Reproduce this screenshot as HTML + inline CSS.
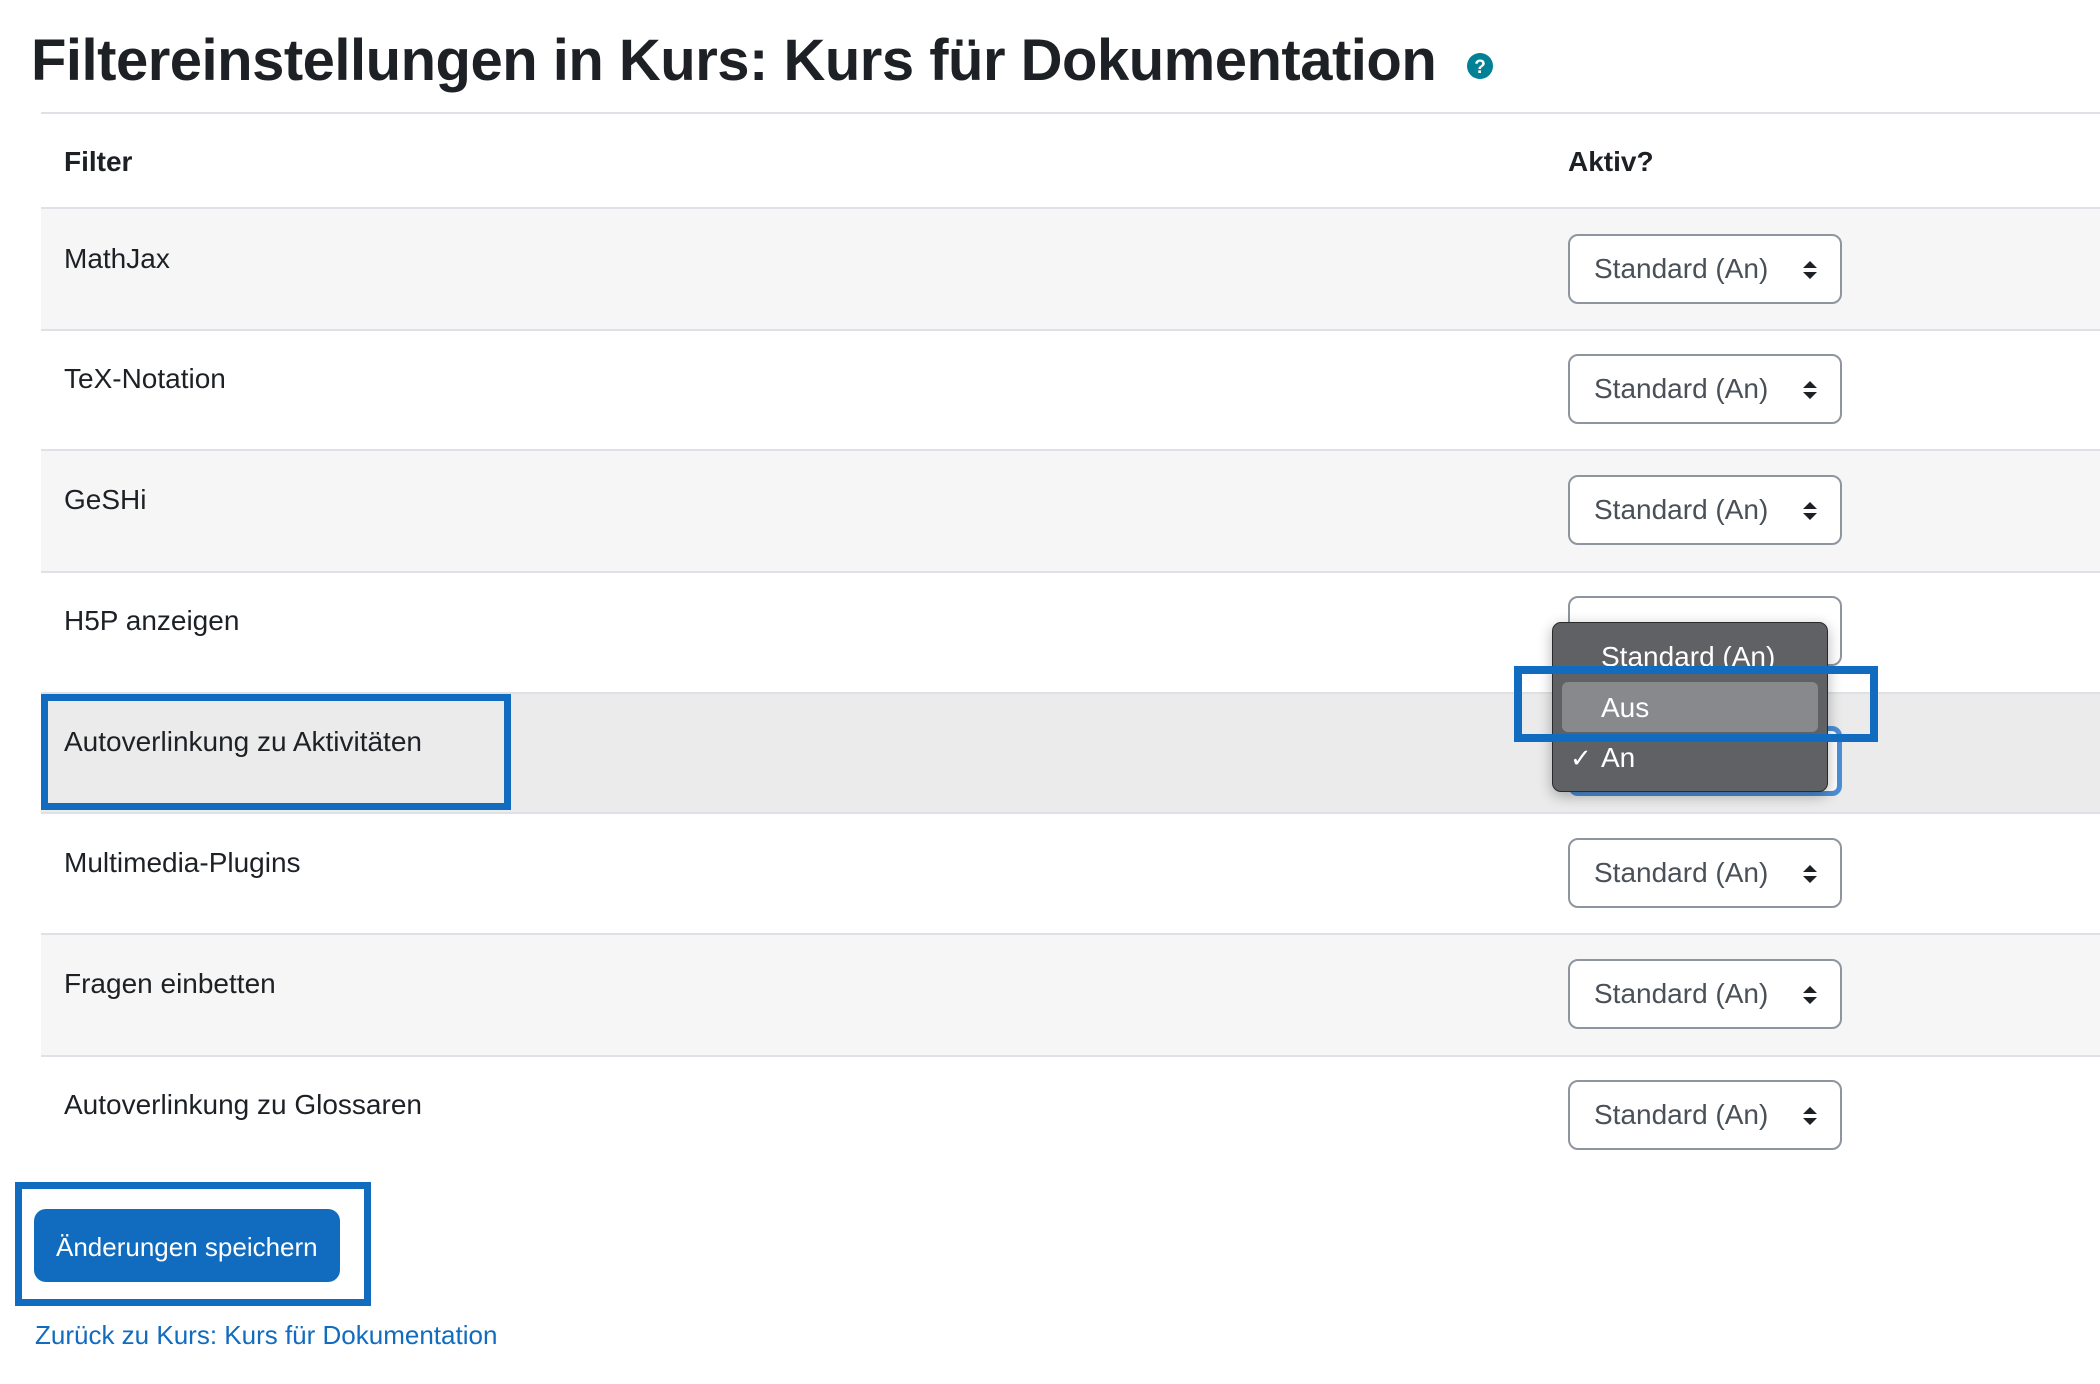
<!DOCTYPE html>
<html><head><meta charset="utf-8"><style>
*{margin:0;padding:0;box-sizing:border-box}
body{width:2100px;height:1384px;background:#fff;font-family:"Liberation Sans",sans-serif;color:#1d2125;position:relative;overflow:hidden}
.a{position:absolute;white-space:nowrap}
.row{position:absolute;left:41px;right:0;border-top:2px solid #dee2e6}
.lbl{position:absolute;left:64px;font-size:28px;line-height:34px}
.sel{position:absolute;left:1568px;width:274px;height:70px;border:2px solid #8f959e;border-radius:10px;background:#fff;font-size:28px;color:#495057}
.sel span{position:absolute;left:24px;top:16px;line-height:34px}
.arr{position:absolute;left:232px;top:24px;width:16px;height:20px}
.hl{position:absolute;border:7px solid #116cbf}
</style></head><body>
<div class="a" style="left:31px;top:26px;font-size:58px;font-weight:bold;line-height:70px;letter-spacing:-0.5px">Filtereinstellungen in Kurs: Kurs für Dokumentation</div>
<svg class="a" style="left:1466px;top:52px" width="28" height="28" viewBox="0 0 28 28"><circle cx="14" cy="14" r="13" fill="#008196"/><text x="14" y="21" text-anchor="middle" font-family="Liberation Sans" font-weight="bold" font-size="19" fill="#fff">?</text></svg>
<div class="a" style="left:41px;right:0;top:112px;border-top:2px solid #dee2e6"></div>
<div class="a" style="left:64px;top:145px;font-size:28px;font-weight:bold;line-height:34px">Filter</div>
<div class="a" style="left:1568px;top:145px;font-size:28px;font-weight:bold;line-height:34px">Aktiv?</div>
<div class="a" style="left:41px;right:0;top:207px;border-top:4px solid #dee2e6"></div>

<div class="row" style="top:209px;height:122px;background:#f6f6f6;border-top:none"></div>
<div class="row" style="top:329px;height:122px;background:#fff"></div>
<div class="row" style="top:449px;height:122px;background:#f6f6f6"></div>
<div class="row" style="top:571px;height:122px;background:#fff"></div>
<div class="row" style="top:692px;height:122px;background:#ebebeb"></div>
<div class="row" style="top:812px;height:122px;background:#fff"></div>
<div class="row" style="top:933px;height:122px;background:#f6f6f6"></div>
<div class="row" style="top:1055px;height:122px;background:#fff"></div>

<div class="lbl" style="top:242px">MathJax</div>
<div class="lbl" style="top:362px">TeX-Notation</div>
<div class="lbl" style="top:483px">GeSHi</div>
<div class="lbl" style="top:604px">H5P anzeigen</div>
<div class="lbl" style="top:725px">Autoverlinkung zu Aktivitäten</div>
<div class="lbl" style="top:846px">Multimedia-Plugins</div>
<div class="lbl" style="top:967px">Fragen einbetten</div>
<div class="lbl" style="top:1088px">Autoverlinkung zu Glossaren</div>

<div class="sel" style="top:234px"><span>Standard (An)</span><svg class="arr" viewBox="0 0 16 20"><path d="M1 8L8 1L15 8Z M1 12L8 19L15 12Z" fill="#1d2125"/></svg></div>
<div class="sel" style="top:354px"><span>Standard (An)</span><svg class="arr" viewBox="0 0 16 20"><path d="M1 8L8 1L15 8Z M1 12L8 19L15 12Z" fill="#1d2125"/></svg></div>
<div class="sel" style="top:475px"><span>Standard (An)</span><svg class="arr" viewBox="0 0 16 20"><path d="M1 8L8 1L15 8Z M1 12L8 19L15 12Z" fill="#1d2125"/></svg></div>
<div class="sel" style="top:596px"></div>
<div class="sel" style="top:726px;border:5px solid #4b8fd6;height:70px;left:1568px"></div>
<div class="sel" style="top:838px"><span>Standard (An)</span><svg class="arr" viewBox="0 0 16 20"><path d="M1 8L8 1L15 8Z M1 12L8 19L15 12Z" fill="#1d2125"/></svg></div>
<div class="sel" style="top:959px"><span>Standard (An)</span><svg class="arr" viewBox="0 0 16 20"><path d="M1 8L8 1L15 8Z M1 12L8 19L15 12Z" fill="#1d2125"/></svg></div>
<div class="sel" style="top:1080px"><span>Standard (An)</span><svg class="arr" viewBox="0 0 16 20"><path d="M1 8L8 1L15 8Z M1 12L8 19L15 12Z" fill="#1d2125"/></svg></div>

<div class="a" style="left:1552px;top:622px;width:276px;height:170px;background:#606164;border:1px solid #2a2a2a;border-radius:9px;box-shadow:0 4px 14px rgba(0,0,0,.3)"></div>
<div class="a" style="left:1562px;top:682px;width:256px;height:50px;background:#88898c;border-radius:6px"></div>
<div class="a" style="left:1601px;top:640px;font-size:28px;line-height:34px;color:#fff">Standard (An)</div>
<div class="a" style="left:1601px;top:691px;font-size:28px;line-height:34px;color:#fff">Aus</div>
<div class="a" style="left:1570px;top:741px;font-size:26px;line-height:34px;color:#fff">✓</div>
<div class="a" style="left:1601px;top:741px;font-size:28px;line-height:34px;color:#fff">An</div>

<div class="hl" style="left:41px;top:694px;width:470px;height:116px"></div>
<div class="hl" style="left:1514px;top:666px;width:364px;height:76px;border-width:8px"></div>

<div class="a" style="left:34px;top:1209px;width:306px;height:73px;background:#116cbf;border-radius:12px"></div>
<div class="a" style="left:56px;top:1230px;font-size:26px;line-height:34px;color:#fff">Änderungen speichern</div>
<div class="hl" style="left:15px;top:1182px;width:356px;height:124px"></div>
<div class="a" style="left:35px;top:1318px;font-size:26px;line-height:34px;color:#116cbf">Zurück zu Kurs: Kurs für Dokumentation</div>
</body></html>
